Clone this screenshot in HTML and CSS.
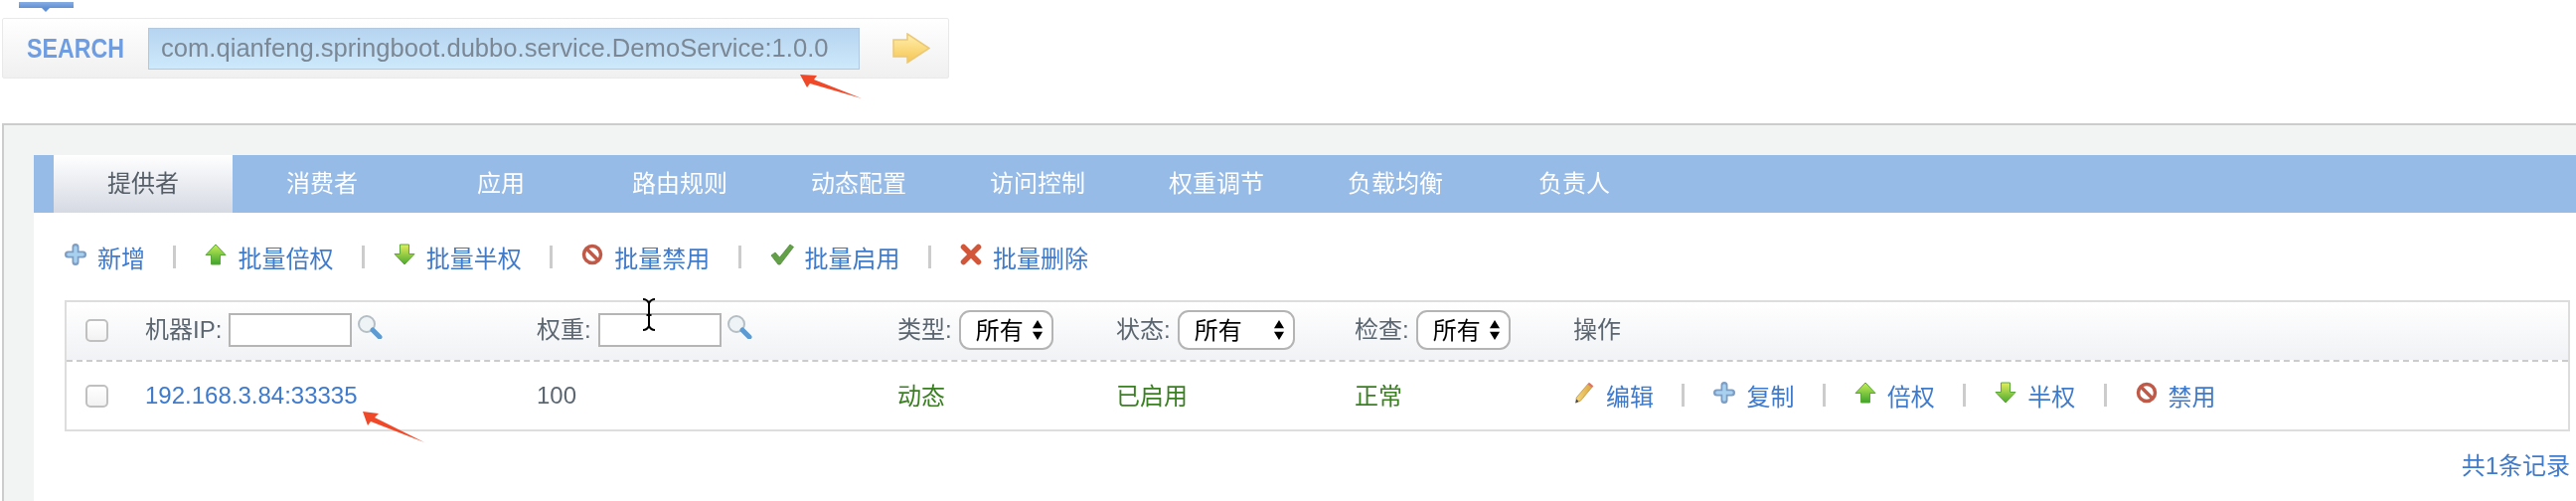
FILE: index.html
```html
<!DOCTYPE html>
<html lang="zh-CN">
<head>
  <meta charset="UTF-8">
  <title>Dubbo Admin</title>
  <link rel="stylesheet" href="styles.css">
</head>
<body>

  <!-- shared icons -->
  <svg class="sprite" aria-hidden="true">
    <defs>
      <linearGradient id="g-up" x1="0" y1="0" x2="0" y2="1"><stop offset="0" stop-color="#c9ef58"/><stop offset="1" stop-color="#3da32b"/></linearGradient>
      <linearGradient id="g-down" x1="0" y1="0" x2="0" y2="1"><stop offset="0" stop-color="#e4ee5c"/><stop offset="1" stop-color="#4aa92e"/></linearGradient>
      <linearGradient id="g-go" x1="0" y1="0" x2="0" y2="1"><stop offset="0" stop-color="#fff0ae"/><stop offset="1" stop-color="#f6c552"/></linearGradient>
      <linearGradient id="g-pen" x1="0" y1="0" x2="1" y2="0"><stop offset="0" stop-color="#f6d87c"/><stop offset="1" stop-color="#d9a53c"/></linearGradient>
    </defs>
    <symbol id="i-plus" viewBox="0 0 22 22">
      <path d="M11 3.500v15M3.500 11h15" stroke="#7d9dc3" stroke-width="7" stroke-linecap="round" fill="none"/>
      <path d="M11 4v14M4 11h14" stroke="#a8d0ef" stroke-width="3.500" stroke-linecap="round" fill="none"/>
    </symbol>
    <symbol id="i-up" viewBox="0 0 22 22">
      <path d="M11 1 21 11.500H15.500V21H6.500V11.500H1Z" fill="url(#g-up)" stroke="#5aa835" stroke-width="1"/>
    </symbol>
    <symbol id="i-down" viewBox="0 0 22 22">
      <path d="M6.500 1H15.500V10.500H21L11 21 1 10.500H6.500Z" fill="url(#g-down)" stroke="#5aa835" stroke-width="1"/>
    </symbol>
    <symbol id="i-ban" viewBox="0 0 22 22">
      <circle cx="11" cy="11" r="8.500" fill="#fff" stroke="#c05a48" stroke-width="3.500"/>
      <path d="M5.500 5.500 16.500 16.500" stroke="#c05a48" stroke-width="3.500"/>
    </symbol>
    <symbol id="i-check" viewBox="0 0 24 22">
      <path d="M1 12 5 9 9.500 14 20 1 23.500 3.500 10 21H8Z" fill="#63a048" stroke="#4f8c3a" stroke-width=".8"/>
    </symbol>
    <symbol id="i-del" viewBox="0 0 22 22">
      <path d="M3.500 3.500 18.500 18.500M18.500 3.500 3.500 18.500" stroke="#d2573a" stroke-width="5.500" stroke-linecap="round"/>
    </symbol>
    <symbol id="i-pen" viewBox="0 0 22 24">
      <path d="M16 1.500 20.500 5 7 21 2 23 2.500 17.500Z" fill="url(#g-pen)" stroke="#b98a34" stroke-width=".8"/>
      <path d="M15 3 19.500 6.500 21 4.500 17 1Z" fill="#d9776a"/>
      <path d="M2.500 19 5 21.500 1.500 23.500Z" fill="#444"/>
    </symbol>
    <symbol id="i-find" viewBox="0 0 26 24">
      <circle cx="10" cy="9" r="8" fill="#eef3f6" stroke="#b4bec4" stroke-width="2"/>
      <path d="M16 15 23 22" stroke="#5b9ad2" stroke-width="5" stroke-linecap="round"/>
    </symbol>
    <symbol id="i-arrows" viewBox="0 0 12 24">
      <path d="M6 1 11.500 10H.5ZM6 23 .5 14H11.500Z" fill="#000"/>
    </symbol>
  </svg>

  <div class="nav-stub"></div>

  <!-- search -->
  <form class="search-bar">
    <span class="search-label"><span>SEARCH</span></span>
    <input class="search-input" type="text" value="com.qianfeng.springboot.dubbo.service.DemoService:1.0.0">
    <svg class="search-go" viewBox="0 0 38 31"><path d="M1 7H15V1L37 15.500 15 30V24H1Z" fill="url(#g-go)" stroke="#e9c878" stroke-width="1.500"/></svg>
  </form>

  <div class="panel">
    <ul class="tabs">
      <li class="tab active">提供者</li>
      <li class="tab">消费者</li>
      <li class="tab">应用</li>
      <li class="tab">路由规则</li>
      <li class="tab">动态配置</li>
      <li class="tab">访问控制</li>
      <li class="tab">权重调节</li>
      <li class="tab">负载均衡</li>
      <li class="tab">负责人</li>
    </ul>

    <div class="content">
      <div class="toolbar">
        <a class="op"><svg class="icon"><use href="#i-plus"/></svg>新增</a><i class="sep"></i>
        <a class="op"><svg class="icon"><use href="#i-up"/></svg>批量倍权</a><i class="sep"></i>
        <a class="op"><svg class="icon"><use href="#i-down"/></svg>批量半权</a><i class="sep"></i>
        <a class="op"><svg class="icon"><use href="#i-ban"/></svg>批量禁用</a><i class="sep"></i>
        <a class="op"><svg class="icon icon-wide"><use href="#i-check"/></svg>批量启用</a><i class="sep"></i>
        <a class="op"><svg class="icon"><use href="#i-del"/></svg>批量删除</a>
      </div>

      <div class="list">
        <div class="row head">
          <input class="check" type="checkbox">
          <div class="cell"><span class="lbl">机器IP:</span><input class="filter" type="text"><svg class="find"><use href="#i-find"/></svg></div>
          <div class="cell"><span class="lbl">权重:</span><input class="filter" type="text"><svg class="find"><use href="#i-find"/></svg></div>
          <div class="cell"><span class="lbl">类型:</span><span class="sel"><select><option>所有</option></select><svg><use href="#i-arrows"/></svg></span></div>
          <div class="cell"><span class="lbl">状态:</span><span class="sel sel-wide"><select><option>所有</option></select><svg><use href="#i-arrows"/></svg></span></div>
          <div class="cell"><span class="lbl">检查:</span><span class="sel"><select><option>所有</option></select><svg><use href="#i-arrows"/></svg></span></div>
          <div class="cell"><span class="lbl">操作</span></div>
        </div>
        <div class="row body">
          <input class="check" type="checkbox">
          <div class="cell"><a class="link">192.168.3.84:33335</a></div>
          <div class="cell">100</div>
          <div class="cell ok"><span class="lbl lbl-body">动态</span></div>
          <div class="cell ok"><span class="lbl lbl-body">已启用</span></div>
          <div class="cell ok"><span class="lbl lbl-body">正常</span></div>
          <div class="cell actions">
            <a class="op"><svg class="icon"><use href="#i-pen"/></svg>编辑</a><i class="sep"></i>
            <a class="op"><svg class="icon"><use href="#i-plus"/></svg>复制</a><i class="sep"></i>
            <a class="op"><svg class="icon"><use href="#i-up"/></svg>倍权</a><i class="sep"></i>
            <a class="op"><svg class="icon"><use href="#i-down"/></svg>半权</a><i class="sep"></i>
            <a class="op"><svg class="icon"><use href="#i-ban"/></svg>禁用</a>
          </div>
        </div>
      </div>

      <div class="total">共1条记录</div>
    </div>
  </div>

  <!-- screenshot annotations and the mouse cursor -->
  <svg class="mark mark-search" viewBox="0 0 64 26"><path d="M1 1 18 2 15 6 63 25 11 10 8 14Z" fill="#f0492a"/></svg>
  <svg class="mark mark-ip" viewBox="0 0 64 33"><path d="M1 1 17 3 13 7 63 32 9 11 6 15Z" fill="#f0492a"/></svg>
  <svg class="mark mark-cursor" viewBox="0 0 16 33"><path d="M2 1Q6 1 8 5 10 1 14 1M8 5V28M2 32Q6 32 8 28 10 32 14 32M5.500 17H10.500" fill="none" stroke="#000" stroke-width="2"/></svg>

</body>
</html>
```

FILE: styles.css
```css
/* base */
html, body {
  margin: 0;
  height: 504px;
  overflow: hidden;
}

body {
  position: relative;
  background-color: #fff;
  font-family: "Liberation Sans", "Noto Sans CJK SC", sans-serif;
  font-size: 24px;
  color: #5c6670;
  filter: blur(0.5px);
}

.sprite {
  position: absolute;
  width: 0;
  height: 0;
}

/* leftover of the menu above the search */
.nav-stub {
  position: relative;
  width: 55px;
  height: 6px;
  margin: 2px 0 0 19px;
  background: linear-gradient(#86aee4, #5f90d4);
}

.nav-stub::after {
  content: "";
  position: absolute;
  left: 23px;
  top: 6px;
  border: 4px solid transparent;
  border-top-color: #5f90d4;
}

/* search */
.search-bar {
  display: flex;
  align-items: center;
  box-sizing: border-box;
  width: 953px;
  height: 61px;
  margin: 10px 0 0 2px;
  padding-left: 24px;
  border: 1px solid #e9e9e9;
  border-radius: 2px;
  background: linear-gradient(#fff, #f0f0f0);
}

.search-label {
  width: 122px;
  font-size: 28px;
  font-weight: bold;
  color: #6f9de1;
}

.search-label span {
  display: inline-block;
  transform: scaleX(0.83);
  transform-origin: left center;
}

.search-input {
  box-sizing: border-box;
  width: 716px;
  height: 42px;
  padding: 0 0 0 12px;
  border: 1px solid #b0c8e0;
  background: linear-gradient(#b6d4f0, #cde9fb);
  font-family: inherit;
  font-size: 25.6px;
  color: #7b8794;
}

.search-go {
  width: 38px;
  height: 31px;
  margin-left: 33px;
}

/* main panel */
.panel {
  box-sizing: border-box;
  height: 380px;
  margin: 45px 0 0 2px;
  padding: 30px 0 0 30px;
  border-top: 2px solid #ccc;
  border-left: 2px solid #ccc;
  background-color: #f2f4f3;
}

.tabs {
  display: flex;
  height: 58px;
  margin: 0;
  padding: 0 0 0 20px;
  list-style: none;
  background-color: #97bbe7;
}

.tab {
  width: 180px;
  line-height: 58px;
  text-align: center;
  color: #fff;
}

.tab.active {
  background: linear-gradient(#fff, #d5d9e2);
  color: #555d66;
}

.content {
  height: 290px;
  padding: 21px 6px 0 31px;
  background-color: #fff;
}

/* toolbar and row actions */
.toolbar {
  display: flex;
  align-items: center;
  height: 46px;
}

.op {
  display: inline-flex;
  align-items: center;
  color: #3f7acb;
}

.icon {
  flex: none;
  width: 22px;
  height: 22px;
  margin: -5px 11px 0 0;
}

.icon-wide {
  width: 24px;
}

.sep {
  display: inline-block;
  width: 3px;
  height: 23px;
  margin: 0 29px 0 28.4px;
  background-color: #ccc;
  vertical-align: middle;
}

.actions {
  margin-bottom: 2px;
}

/* list */
.list {
  margin-top: 21px;
  border: 2px solid #ddd;
}

.row {
  display: grid;
  grid-template-columns: 60px 394px 363px 220px 240px 220px 1fr;
  align-items: center;
  padding-left: 19px;
}

.row.head {
  box-sizing: border-box;
  height: 60px;
  padding-bottom: 2px;
  border-bottom: 2px dashed #ccc;
  background: linear-gradient(#fff, #f0f2f5);
}

.row.body {
  height: 68px;
}

.cell {
  display: flex;
  align-items: center;
  white-space: nowrap;
}

/* CJK text sits low in the line box */
.lbl {
  margin-bottom: 6px;
}

.lbl-body {
  margin-bottom: 4px;
}

.check {
  appearance: none;
  width: 23px;
  height: 23px;
  margin: 0;
  border: 2px solid #c0c0c0;
  border-radius: 5px;
  background: linear-gradient(#fff, #f2f2f2);
}

.filter {
  box-sizing: border-box;
  width: 124px;
  height: 34px;
  margin-left: 7px;
  border: 2px solid #b5b5b5;
  background-color: #fff;
}

.find {
  width: 26px;
  height: 24px;
  margin: -6px 0 0 5px;
}

.sel {
  position: relative;
  margin-left: 7px;
}

.sel select {
  appearance: none;
  box-sizing: border-box;
  display: block;
  width: 95px;
  height: 40px;
  padding: 0 0 0 15px;
  border: 2px solid #b4b4b4;
  border-radius: 11px;
  background-color: #fff;
  font-family: inherit;
  font-size: 24px;
  color: #000;
}

.sel-wide select {
  width: 118px;
}

.sel svg {
  position: absolute;
  right: 10px;
  top: 9px;
  width: 12px;
  height: 22px;
}

.link {
  color: #3f7acb;
}

.ok {
  color: #3a7f22;
}

.total {
  margin-top: 18px;
  line-height: 34px;
  text-align: right;
  color: #3f7acb;
}

/* annotations */
.mark {
  position: absolute;
}

.mark-search {
  left: 804px;
  top: 74px;
  width: 64px;
  height: 26px;
}

.mark-ip {
  left: 364px;
  top: 413px;
  width: 64px;
  height: 33px;
}

.mark-cursor {
  left: 645px;
  top: 300px;
  width: 16px;
  height: 33px;
}
```
